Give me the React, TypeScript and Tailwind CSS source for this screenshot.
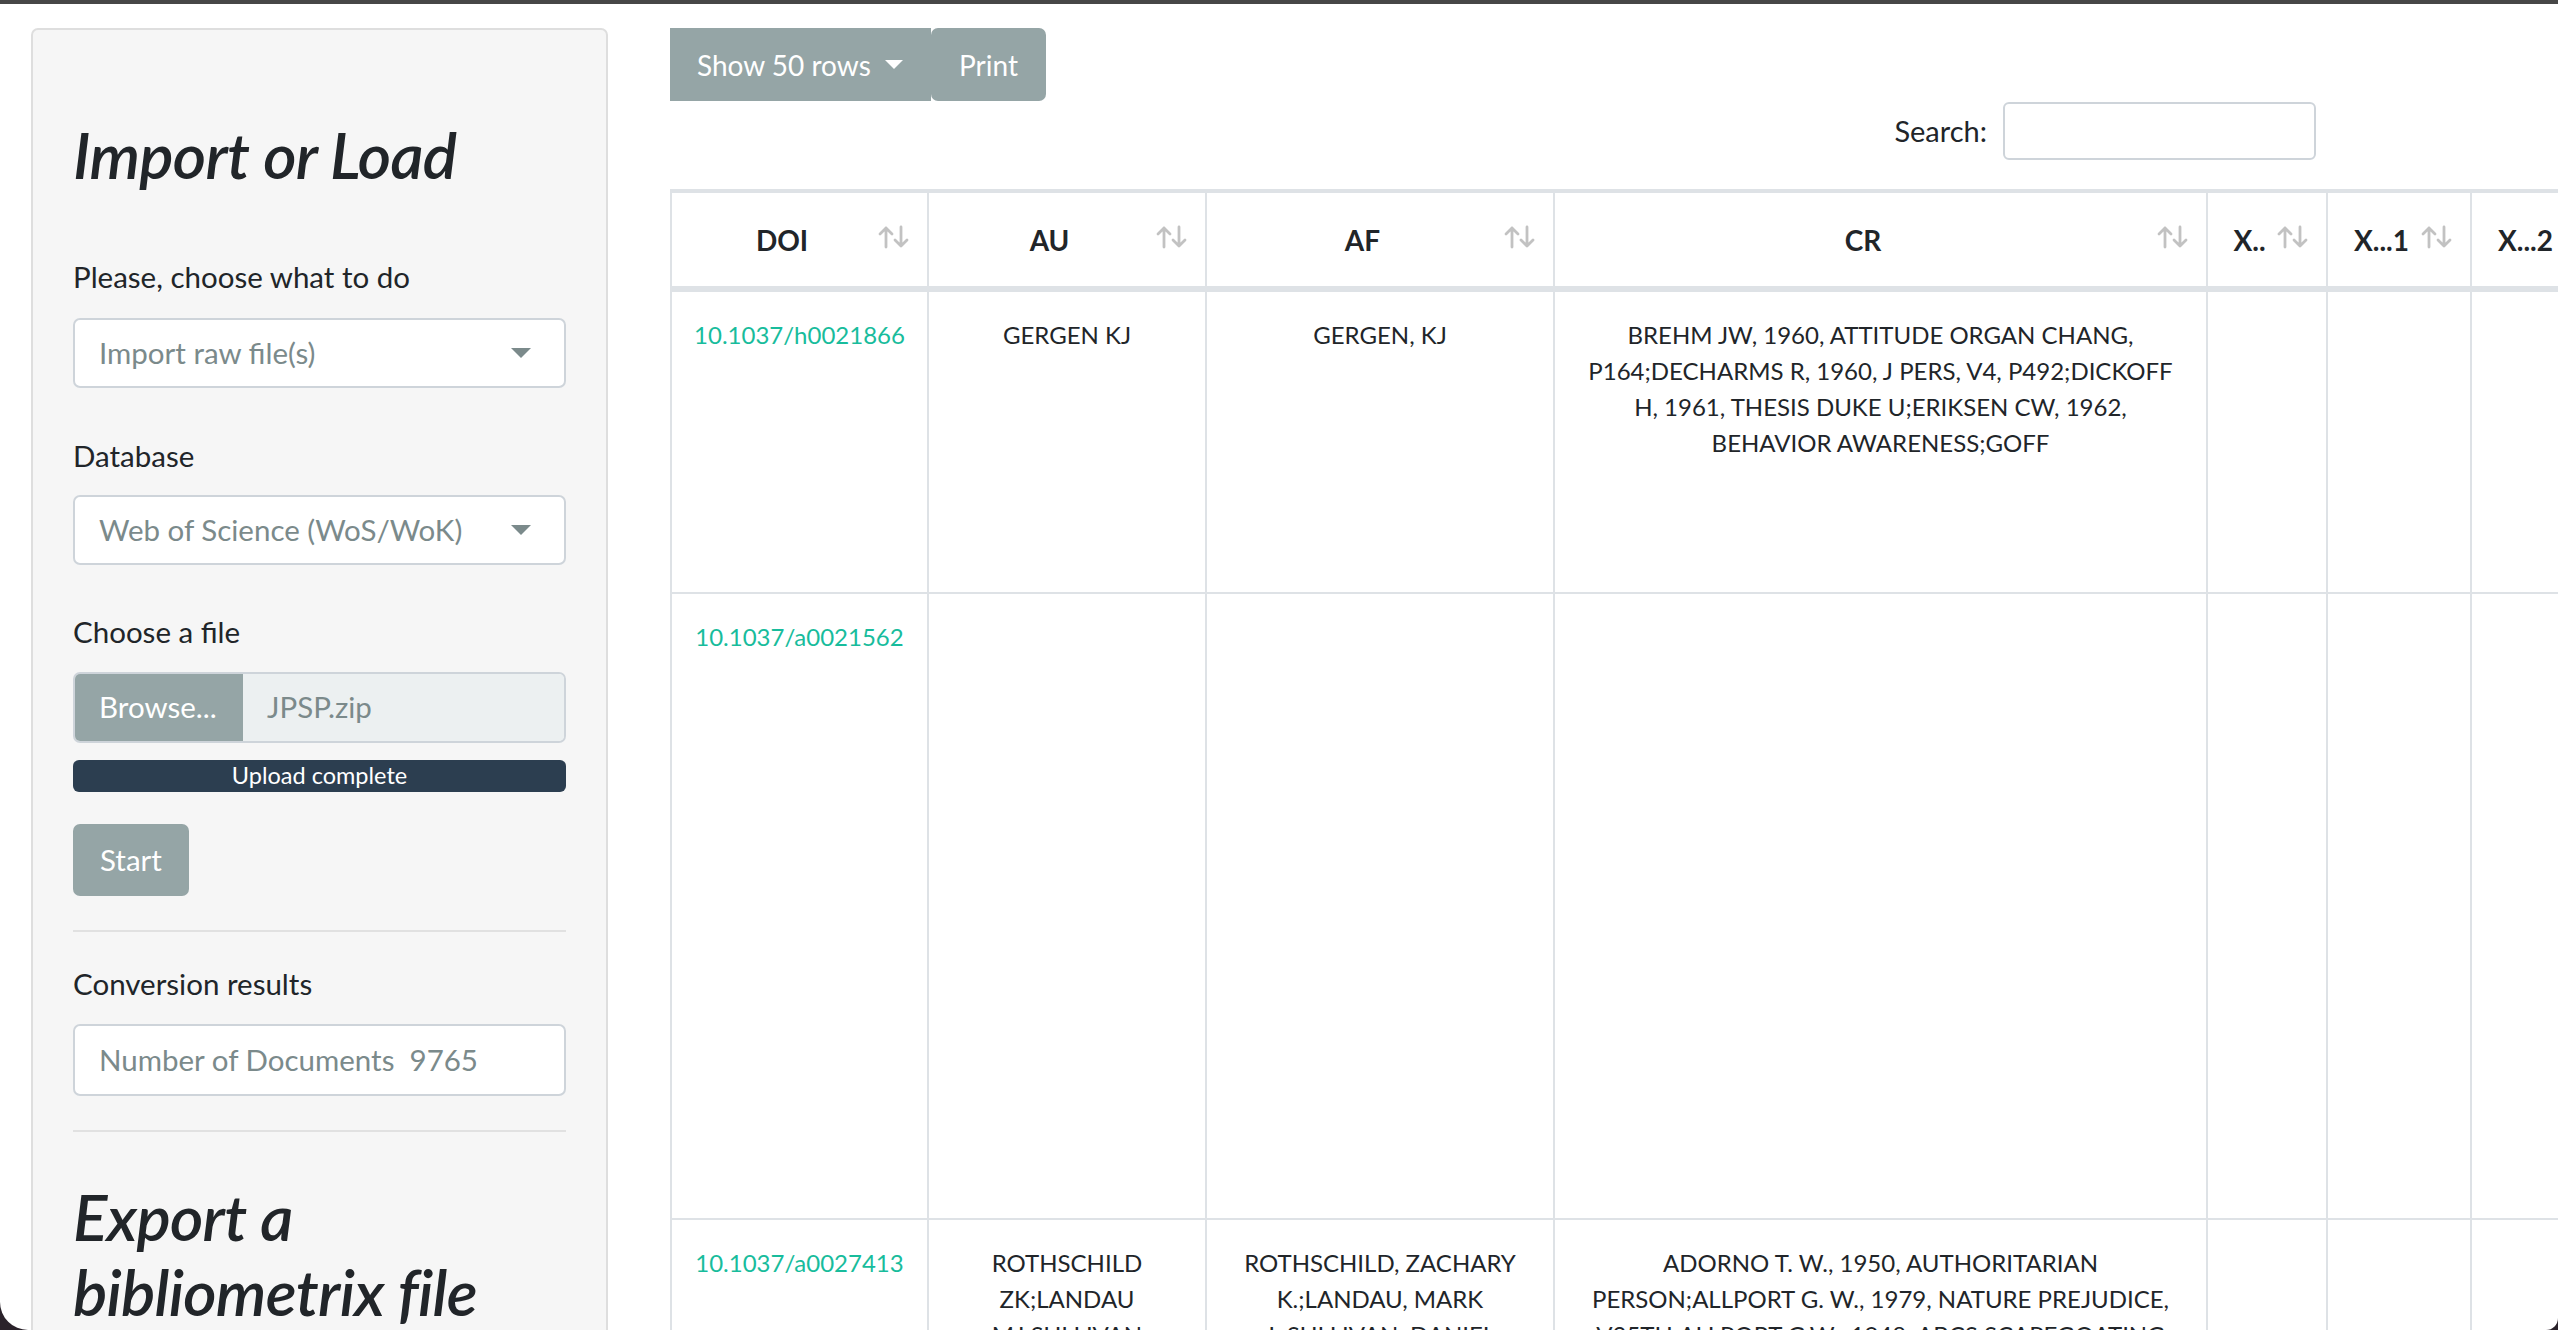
import type { ReactNode } from 'react';

const COLS = ['DOI', 'AU', 'AF', 'CR', 'X..', 'X...1', 'X...2', 'X...3'];

const GRID = 'grid grid-cols-[257px_278px_348px_653px_120px_144px_144px_144px]';

function Caret({ className }: { className?: string }) {
  return (
    <svg width="20" height="10" viewBox="0 0 20 10" className={className}>
      <polygon points="0,0 20,0 10,10" fill="currentColor" />
    </svg>
  );
}

function SortIcon() {
  return (
    <svg width="34" height="24" viewBox="0 0 34 24" className="text-[#c2c2c2]">
      <g fill="none" stroke="currentColor" strokeWidth="2.8" strokeLinecap="round" strokeLinejoin="round">
        <path d="M9 22V3M3 9l6-6 6 6" />
        <path d="M24 2v19M18 15l6 6 6-6" />
      </g>
    </svg>
  );
}

function Label({ children, className = '' }: { children: ReactNode; className?: string }) {
  return <div className={`text-[29.5px] leading-[42px] text-[#212529] ${className}`}>{children}</div>;
}

function Select({ value, className = '' }: { value: string; className?: string }) {
  return (
    <div
      className={`flex h-[70px] items-center justify-between rounded-[7px] border-2 border-[#ced4da] bg-white pl-[24px] pr-[33px] text-[29.5px] text-[#7b8a8b] ${className}`}
    >
      <span>{value}</span>
      <Caret />
    </div>
  );
}

function Sidebar() {
  return (
    <aside className="h-[1400px] w-[577px] shrink-0 rounded-[7px] border-2 border-[#dedede] bg-[#f6f6f6] px-[40px] pt-[87px]">
      <h2 className="text-[64px] font-semibold italic leading-[75px] tracking-[-0.7px] text-[#212529]">Import or Load</h2>

      <Label className="mt-[64px]">Please, choose what to do</Label>
      <Select value="Import raw file(s)" className="mt-[20px]" />

      <Label className="mt-[47px]">Database</Label>
      <Select value="Web of Science (WoS/WoK)" className="mt-[18px]" />

      <Label className="mt-[46px]">Choose a file</Label>
      <div className="mt-[19px] flex h-[71px] overflow-hidden rounded-[7px] border-2 border-[#ced4da] text-[29.5px]">
        <div className="flex w-[168px] items-center bg-[#95a5a6] pl-[24px] text-white">Browse...</div>
        <div className="flex flex-1 items-center bg-[#ecf0f1] pl-[24px] text-[#7b8a8b]">JPSP.zip</div>
      </div>
      <div className="mt-[17px] flex h-[32px] items-center justify-center rounded-[6px] bg-[#2c3e50] text-[23.5px] text-white">
        Upload complete
      </div>

      <button className="mt-[32px] flex h-[72px] items-center rounded-[7px] bg-[#95a5a6] px-[27px] text-[29.5px] text-white">
        Start
      </button>

      <hr className="mt-[34px] border-t-2 border-[#e1e1e1]" />

      <Label className="mt-[31px]">Conversion results</Label>
      <div className="mt-[19px] flex h-[72px] items-center whitespace-pre rounded-[7px] border-2 border-[#ced4da] bg-white pl-[24px] text-[29.5px] text-[#7b8a8b]">
        {'Number of Documents  9765'}
      </div>

      <hr className="mt-[34px] border-t-2 border-[#e1e1e1]" />

      <h2 className="mt-[47px] text-[64px] font-semibold italic leading-[75px] tracking-[-0.7px] text-[#212529]">
        Export a bibliometrix file
      </h2>
    </aside>
  );
}

function Lines({ lines }: { lines: string[] }) {
  return (
    <>
      {lines.map((l) => (
        <div key={l} className="whitespace-nowrap">
          {l}
        </div>
      ))}
    </>
  );
}

const ROWS: { h: string; cells: ReactNode[] }[] = [
  {
    h: 'h-[302px]',
    cells: [
      '10.1037/h0021866',
      'GERGEN KJ',
      'GERGEN, KJ',
      <Lines
        lines={[
          'BREHM JW, 1960, ATTITUDE ORGAN CHANG,',
          'P164;DECHARMS R, 1960, J PERS, V4, P492;DICKOFF',
          'H, 1961, THESIS DUKE U;ERIKSEN CW, 1962,',
          'BEHAVIOR AWARENESS;GOFF',
        ]}
      />,
      '',
      '',
      '',
      '',
    ],
  },
  {
    h: 'h-[626px]',
    cells: ['10.1037/a0021562', '', '', '', '', '', '', ''],
  },
  {
    h: 'h-[300px]',
    cells: [
      '10.1037/a0027413',
      'ROTHSCHILD ZK;LANDAU MJ;SULLIVAN D;KEEFER LA',
      'ROTHSCHILD, ZACHARY K.;LANDAU, MARK J.;SULLIVAN, DANIEL',
      <Lines
        lines={[
          'ADORNO T. W., 1950, AUTHORITARIAN',
          'PERSON;ALLPORT G. W., 1979, NATURE PREJUDICE,',
          'V25TH;ALLPORT G.W., 1948, ABCS SCAPEGOATING',
        ]}
      />,
      '',
      '',
      '',
      '',
    ],
  },
];

function DataTable() {
  return (
    <div className="mt-[29px] w-max shrink-0 border-l-2 border-[#dee2e6]">
      <div className={`${GRID} h-[103px] border-t-4 border-b-[6px] border-[#dee2e6]`}>
        {COLS.map((c) => (
          <div
            key={c}
            className="relative flex items-center justify-center border-r-2 border-[#dee2e6] pl-[21px] pr-[56px] text-[28px] font-bold text-[#212529]"
          >
            {c}
            <span className="absolute right-[16px] top-[32px]">
              <SortIcon />
            </span>
          </div>
        ))}
      </div>
      {ROWS.map((row, i) => (
        <div key={i} className={`${GRID} ${row.h} border-b-2 border-[#dee2e6]`}>
          {row.cells.map((cell, j) => (
            <div
              key={j}
              className={`border-r-2 border-[#dee2e6] px-[21px] pt-[25px] text-center text-[24px] leading-[36px] ${
                j === 0 ? 'text-[#18bc9c]' : 'text-[#212529]'
              }`}
            >
              {cell}
            </div>
          ))}
        </div>
      ))}
    </div>
  );
}

function Main() {
  return (
    <main className="flex w-[1646px] shrink-0 flex-col">
      <div className="flex h-[73px] shrink-0 text-[28px] text-white">
        <button className="flex w-[261px] items-center bg-[#95a5a6] pl-[27px]">
          Show 50 rows
          <Caret className="ml-[14px] h-[9px] w-[18px]" />
        </button>
        <button className="flex w-[115px] items-center justify-center rounded-[7px] bg-[#95a5a6]">Print</button>
      </div>
      <div className="mt-[1px] flex h-[58px] shrink-0 items-center justify-end">
        <span className="mr-[16px] text-[29px] text-[#212529]">Search:</span>
        <input className="h-[58px] w-[313px] rounded-[6px] border-2 border-[#ced4da] bg-white outline-none" />
      </div>
      <DataTable />
    </main>
  );
}

export default function App() {
  return (
    <div className="h-[1330px] w-[2558px] overflow-hidden bg-[#2a222a] font-['Lato','Noto_Sans',sans-serif]">
      <div className="h-[4px] bg-[#474747]" />
      <div className="flex h-[1326px] gap-[62px] overflow-hidden rounded-bl-[28px] rounded-br-[12px] bg-white pl-[31px] pt-[24px]">
        <Sidebar />
        <Main />
      </div>
    </div>
  );
}
